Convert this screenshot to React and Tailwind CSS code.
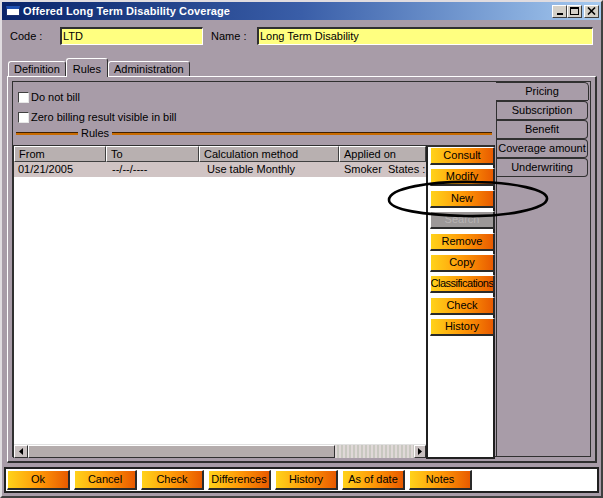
const font = "font-['Liberation_Sans',Arial,sans-serif]";

function OrangeButton({ label, className = "", disabled = false }) {
  if (disabled) {
    return (
      <div
        className={`flex items-center justify-center border-t border-l border-t-white border-l-white border-r-2 border-b-2 border-r-[#2a2a2a] border-b-[#2a2a2a] bg-[#9c9898] text-[#b8b4b4] leading-none ${className}`}
      >
        {label}
      </div>
    );
  }
  return (
    <div
      className={`flex items-center justify-center overflow-hidden whitespace-nowrap border-t border-l border-t-white border-l-white border-r-2 border-b-2 border-r-[#2a2a2a] border-b-[#2a2a2a] bg-gradient-to-r from-[#ffd21a] via-[#ff9a08] to-[#e85a00] text-black leading-none ${className}`}
    >
      {label}
    </div>
  );
}

function Checkbox({ label }) {
  return (
    <div className="flex items-center gap-[2px] h-[14px]">
      <div className="w-[11px] h-[11px] bg-white border-t border-l border-t-[#404040] border-l-[#404040] border-r border-b border-r-[#e8e8e8] border-b-[#e8e8e8]" />
      <span>{label}</span>
    </div>
  );
}

function HeaderCell({ label, width }) {
  return (
    <div
      className={`${width} shrink-0 h-full flex items-center pl-[4px] border-t border-l border-t-white border-l-white border-r border-b border-r-[#404040] border-b-[#404040] bg-[#b8b0b0]`}
    >
      {label}
    </div>
  );
}

function SideTab({ label }) {
  return (
    <div className="h-[19px] w-[91px] flex items-center justify-center border border-l-0 border-[#303030] rounded-r-[4px] bg-[#a89ca8]">
      {label}
    </div>
  );
}

const ruleButtons = [
  "Consult",
  "Modify",
  "New",
  "Search",
  "Remove",
  "Copy",
  "Classifications",
  "Check",
  "History",
];

const bottomButtons = ["Ok", "Cancel", "Check", "Differences", "History", "As of date", "Notes"];

export default function App() {
  return (
    <div
      className={`${font} relative w-[603px] h-[498px] overflow-hidden bg-[#a89ca8] text-[11px] text-black border-t-2 border-l-2 border-t-[#e0dce0] border-l-[#e0dce0] border-r-2 border-b-2 border-r-[#404040] border-b-[#404040]`}
    >
      {/* title bar */}
      <div className="h-[18px] flex items-center bg-gradient-to-r from-[#0a246a] via-[#3a5ea8] to-[#a6caf0] pl-[4px] pr-[2px]">
        <div className="w-[14px] h-[10px] bg-white border-t-[3px] border-t-[#2050b0] border border-[#1a2f70]" />
        <span className="ml-[3px] text-white font-bold text-[11px] tracking-[0.1px]">
          Offered Long Term Disability Coverage
        </span>
        <div className="ml-auto flex items-center gap-0">
          <div className="w-[15px] h-[13px] bg-[#d4d0c8] border-t border-l border-t-white border-l-white border-r border-b border-r-[#404040] border-b-[#404040] flex items-end justify-center pb-[2px]">
            <div className="w-[6px] h-[2px] bg-black" />
          </div>
          <div className="w-[15px] h-[13px] bg-[#d4d0c8] border-t border-l border-t-white border-l-white border-r border-b border-r-[#404040] border-b-[#404040] flex items-center justify-center">
            <div className="w-[9px] h-[8px] border border-black border-t-2" />
          </div>
          <div className="ml-[2px] w-[15px] h-[13px] bg-[#d4d0c8] border-t border-l border-t-white border-l-white border-r border-b border-r-[#404040] border-b-[#404040] flex items-center justify-center">
            <svg width="9" height="8" viewBox="0 0 9 8">
              <path d="M1 0.5 L8 7.5 M8 0.5 L1 7.5" stroke="black" strokeWidth="1.6" />
            </svg>
          </div>
        </div>
      </div>

      {/* code / name row */}
      <div className="mt-[7px] h-[18px] flex items-center">
        <span className="ml-[8px] w-[50px]">Code :</span>
        <div className="w-[143px] h-[18px] bg-[#ffff80] border-t-2 border-l-2 border-t-[#303030] border-l-[#303030] border-r border-b border-r-white border-b-white pl-[1px] leading-[14px]">
          LTD
        </div>
        <span className="ml-[8px] w-[46px]">Name :</span>
        <div className="w-[336px] h-[18px] bg-[#ffff80] border-t-2 border-l-2 border-t-[#303030] border-l-[#303030] border-r border-b border-r-white border-b-white pl-[1px] leading-[14px]">
          Long Term Disability
        </div>
      </div>

      {/* tabs */}
      <div className="mt-[14px] h-[17px] flex items-end pl-[6px] relative z-10">
        <div className="h-[15px] px-[5px] flex items-center border-t border-l border-r border-t-white border-l-white border-r-[#303030] rounded-t-[3px]">
          Definition
        </div>
        <div className="h-[19px] -mb-[1px] px-[6px] flex items-start pt-[2px] border-t border-l border-r border-t-white border-l-white border-r-[#303030] rounded-t-[3px] bg-[#a89ca8]">
          Rules
        </div>
        <div className="h-[15px] px-[5px] flex items-center border-t border-l border-r border-t-white border-l-white border-r-[#303030] rounded-t-[3px]">
          Administration
        </div>
      </div>

      {/* tab panel */}
      <div className="ml-[5px] w-[590px] h-[387px] border-t border-l border-t-white border-l-white border-r-2 border-b-2 border-r-[#303030] border-b-[#303030] p-[4px]">
        <div className="w-full h-full border border-[#303030] flex">
          {/* left content */}
          <div className="w-[483px] flex flex-col">
            <div className="mt-[8px] ml-[5px] flex flex-col gap-[6px]">
              <Checkbox label="Do not bill" />
              <Checkbox label="Zero billing result visible in bill" />
            </div>
            <div className="mt-[3px] ml-[3px] mr-[4px] flex items-center h-[12px]">
              <div className="w-[62px] h-[3px] bg-[#c86a00] border-t border-[#402000]" />
              <span className="px-[3px]">Rules</span>
              <div className="flex-1 h-[3px] bg-[#c86a00] border-t border-[#402000]" />
            </div>

            <div className="mt-[6px] flex h-[313px]">
              {/* grid */}
              <div className="w-[413px] h-full border-t border-l border-[#303030] bg-white flex flex-col">
                <div className="h-[16px] flex">
                  <HeaderCell label="From" width="w-[92px]" />
                  <HeaderCell label="To" width="w-[93px]" />
                  <HeaderCell label="Calculation method" width="w-[140px]" />
                  <HeaderCell label="Applied on" width="w-[87px]" />
                </div>
                <div className="h-[15px] flex items-center bg-[#d0c4c4] whitespace-nowrap overflow-hidden">
                  <span className="w-[94px] shrink-0 pl-[4px]">01/21/2005</span>
                  <span className="w-[95px] shrink-0 pl-[4px]">--/--/----</span>
                  <span className="w-[137px] shrink-0 pl-[4px]">Use table Monthly</span>
                  <span className="shrink-0 pl-[4px]">Smoker&nbsp;&nbsp;States : A</span>
                </div>
                <div className="flex-1" />
                <div className="h-[14px] flex bg-[#c8c0c0] border-t border-[#e0e0e0]">
                  <div className="w-[14px] h-full bg-[#c8c0c0] border-t border-l border-t-white border-l-white border-r border-b border-r-[#303030] border-b-[#303030] flex items-center justify-center">
                    <svg width="5" height="7" viewBox="0 0 5 7">
                      <path d="M4 0 L0 3.5 L4 7 Z" fill="black" />
                    </svg>
                  </div>
                  <div className="w-[307px] h-full bg-[#b4acac] border-t border-l border-t-white border-l-white border-r border-b border-r-[#303030] border-b-[#303030]" />
                  <div className="flex-1 h-full bg-[repeating-linear-gradient(90deg,#e0d8d8_0px,#e0d8d8_2px,#c8c8c0_2px,#c8c8c0_4px)]" />
                  <div className="w-[12px] h-full bg-[#c8c0c0] border-t border-l border-t-white border-l-white border-r border-b border-r-[#303030] border-b-[#303030] flex items-center justify-center">
                    <svg width="5" height="7" viewBox="0 0 5 7">
                      <path d="M0 0 L4 3.5 L0 7 Z" fill="black" />
                    </svg>
                  </div>
                </div>
              </div>

              {/* rule buttons */}
              <div className="w-[69px] h-[314px] border-2 border-[#202020] border-t-[#303030] bg-white pl-[2px] flex flex-col gap-[3.4px]">
                {ruleButtons.map((b, i) => (
                  <OrangeButton
                    key={b}
                    label={b}
                    disabled={i === 3}
                    className={`w-[65px] h-[18px] ${b === "Classifications" ? "tracking-[-0.5px]" : ""}`}
                  />
                ))}
              </div>
            </div>
          </div>

          {/* right side tabs */}
          <div className="flex-1 flex flex-col">
            <div className="h-[18px] w-[93px] flex items-center justify-center border-r border-[#303030] rounded-tr-[5px] border-t border-t-[#303030]">
              Pricing
            </div>
            <div className="flex-1 border-l border-[#303030] border-t border-t-[#303030] mr-[2px]">
              <SideTab label="Subscription" />
              <SideTab label="Benefit" />
              <SideTab label="Coverage amount" />
              <SideTab label="Underwriting" />
            </div>
          </div>
        </div>
      </div>

      {/* bottom button bar */}
      <div className="mt-[4px] ml-[2px] w-[595px] h-[26px] bg-white border-2 border-[#202020] flex items-center gap-[4px] pl-[1px]">
        {bottomButtons.map((b) => (
          <OrangeButton key={b} label={b} className="w-[63px] h-[20px]" />
        ))}
      </div>

      {/* hand-drawn highlight around New */}
      <svg
        className="absolute left-[383px] top-[174px] pointer-events-none"
        width="166"
        height="46"
        viewBox="0 0 166 46"
      >
        <path
          d="M86 6 C 130 6, 163 14, 162 23 C 161 33, 120 41, 80 40 C 40 39, 4 34, 4 24 C 4 12, 45 5, 90 6"
          fill="none"
          stroke="black"
          strokeWidth="2.6"
        />
      </svg>
    </div>
  );
}
